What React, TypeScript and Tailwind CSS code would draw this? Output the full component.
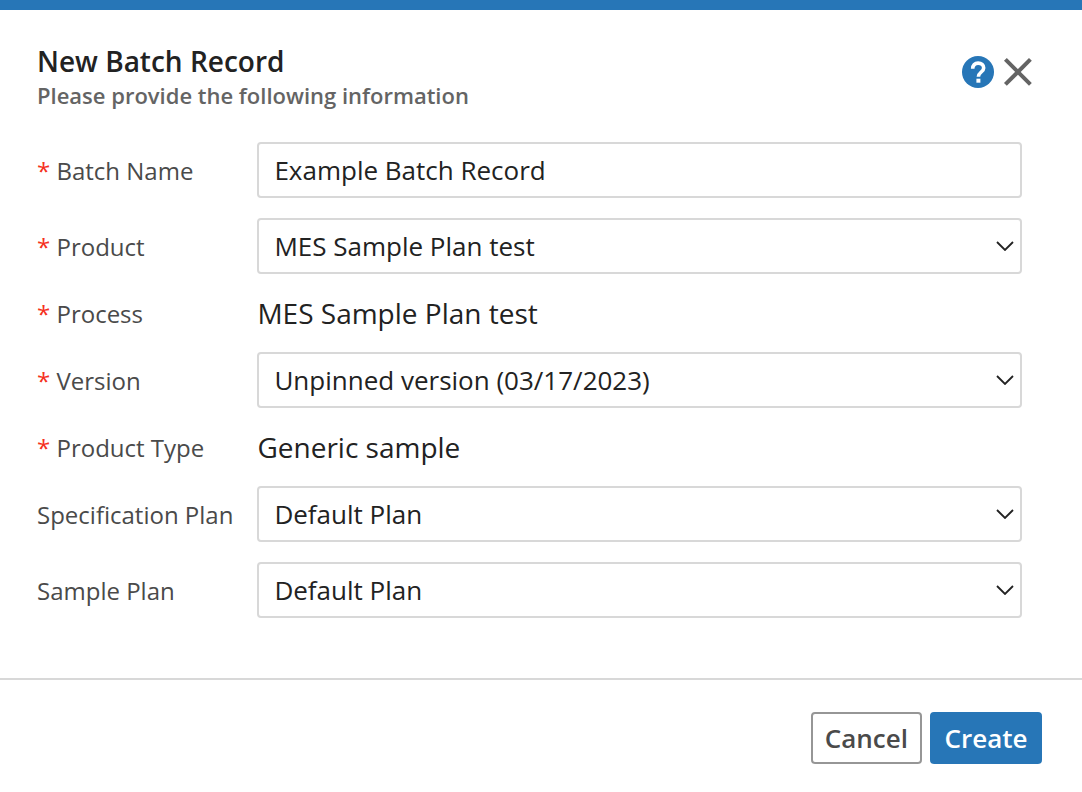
import { useState } from 'react';
import type { ReactNode } from 'react';

const controlClass =
    'block w-full h-14 px-[15px] bg-white border-2 border-[#d8d8d8] rounded text-[26px] text-[#222222] focus:outline-none focus:border-[#2776b7]';

const Required = () => <span className="text-[#f5311d]">* </span>;

const Label = (props: { htmlFor: string; required?: boolean; children: ReactNode }) => (
    <label htmlFor={props.htmlFor} className="pt-0.5 text-2xl text-[#4a4a4a] whitespace-nowrap">
        {props.required && <Required />}
        {props.children}
    </label>
);

const SelectField = (props: { id: string; label: string; required?: boolean; options: string[] }) => {
    const [value, setValue] = useState(props.options[0]);

    return (
        <>
            <Label htmlFor={props.id} required={props.required}>
                {props.label}
            </Label>
            <div className="relative">
                <select
                    id={props.id}
                    value={value}
                    onChange={(e) => setValue(e.target.value)}
                    className={`${controlClass} appearance-none`}
                >
                    {props.options.map((option) => (
                        <option key={option}>{option}</option>
                    ))}
                </select>
                <svg
                    viewBox="0 0 18 10"
                    fill="none"
                    stroke="#222222"
                    strokeWidth="1.8"
                    className="absolute top-0 bottom-0 my-auto right-2 w-[18px] h-[10px] pointer-events-none"
                >
                    <path d="M1 1l8 8 8-8" />
                </svg>
            </div>
        </>
    );
};

const StaticField = (props: { id: string; label: string; value: string }) => (
    <>
        <Label htmlFor={props.id} required>
            {props.label}
        </Label>
        <output id={props.id} className="block text-[28px] leading-[38px] text-[#222222]">
            {props.value}
        </output>
    </>
);

const App = () => {
    const [name, setName] = useState('Example Batch Record');

    return (
        <form
            className="min-h-screen bg-white border-t-10 border-[#2776b7] font-['Open_Sans',sans-serif]"
            onSubmit={(e) => e.preventDefault()}
        >
            <header className="flex items-start justify-between pt-8 pl-[37px] pr-12">
                <div>
                    <h1 className="text-[28px] leading-[38px] font-semibold text-[#222222]">New Batch Record</h1>
                    <p className="text-[22px] leading-[30px] font-semibold text-[#646464]">
                        Please provide the following information
                    </p>
                </div>
                <div className="flex items-center gap-2 pt-3.5">
                    <button type="button" aria-label="Help">
                        <svg viewBox="0 0 32 32" className="block w-8 h-8">
                            <circle cx="16" cy="16" r="16" fill="#2776b7" />
                            <path
                                d="M10.7 12.7C10.7 9.3 12.9 7.1 16.1 7.1c3.3 0 5.6 2 5.6 4.9 0 3.9-5.3 4.2-5.3 8.8"
                                fill="none"
                                stroke="#ffffff"
                                strokeWidth="3.6"
                            />
                            <path d="M14.4 22.7h4v4h-4z" fill="#ffffff" />
                        </svg>
                    </button>
                    <button type="button" aria-label="Close">
                        <svg
                            viewBox="0 0 32 32"
                            fill="none"
                            stroke="#646464"
                            strokeWidth="4"
                            className="block w-8 h-8"
                        >
                            <path d="M3.4 3.4l25 25M28.4 3.4l-25 25" />
                        </svg>
                    </button>
                </div>
            </header>

            <div className="grid grid-cols-[auto_1fr] items-center gap-x-6 gap-y-5 pt-8 pb-15 pl-[37px] pr-15">
                <Label htmlFor="batch-name" required>
                    Batch Name
                </Label>
                <input
                    id="batch-name"
                    type="text"
                    value={name}
                    onChange={(e) => setName(e.target.value)}
                    className={controlClass}
                />
                <SelectField id="product" label="Product" required options={['MES Sample Plan test']} />
                <StaticField id="process" label="Process" value="MES Sample Plan test" />
                <SelectField id="version" label="Version" required options={['Unpinned version (03/17/2023)']} />
                <StaticField id="product-type" label="Product Type" value="Generic sample" />
                <SelectField id="specification-plan" label="Specification Plan" options={['Default Plan']} />
                <SelectField id="sample-plan" label="Sample Plan" options={['Default Plan']} />
            </div>

            <footer className="flex justify-end gap-2 px-10 pt-8 pb-7 border-t-2 border-[#d8d8d8]">
                <button
                    type="button"
                    className="h-13 px-3 bg-white border-2 border-[#969696] rounded text-[26px] leading-9 font-semibold text-[#4a4a4a]"
                >
                    Cancel
                </button>
                <button
                    type="submit"
                    className="h-13 min-w-28 px-3 bg-[#2776b7] border-2 border-[#2776b7] rounded text-[26px] leading-9 font-semibold text-white"
                >
                    Create
                </button>
            </footer>
        </form>
    );
};

export default App;
